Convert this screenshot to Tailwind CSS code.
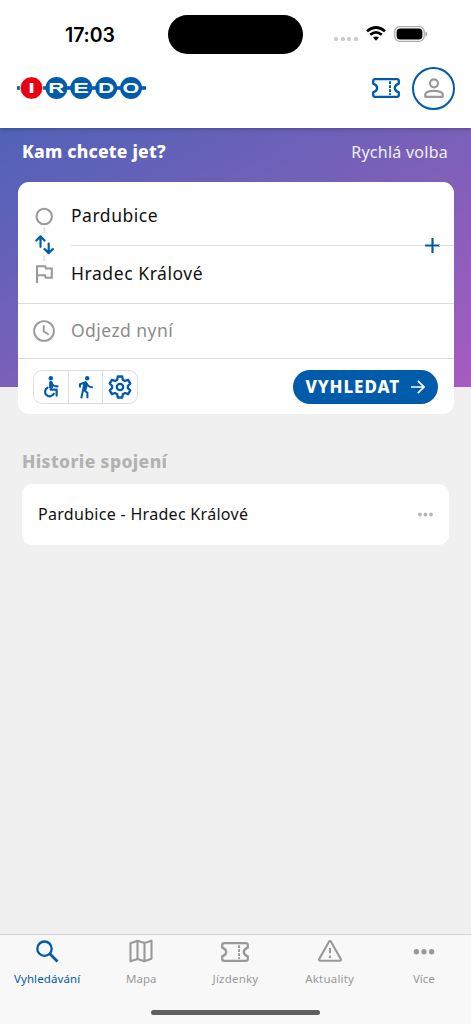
<!DOCTYPE html>
<html lang="cs">
<head>
<meta charset="utf-8">
<title>IREDO</title>
<script src="https://cdn.jsdelivr.net/npm/@tailwindcss/browser@4"></script>
</head>
<body class="w-[471px] h-[1024px] overflow-hidden bg-[#f0f0f0] font-['Noto_Sans',sans-serif] text-[#111] flex flex-col">
<svg class="hidden">
  <symbol id="ticket" viewBox="0 0 28 20"><path d="M3 1.2H25Q26.8 1.2 26.8 3V5.6Q22.8 7.2 22.8 10T26.8 14.4V17Q26.8 18.8 25 18.8H3Q1.2 18.8 1.2 17V14.4Q5.2 12.8 5.2 10T1.2 5.6V3Q1.2 1.2 3 1.2Z" fill="none" stroke="currentColor" stroke-width="2.3" stroke-linejoin="round"/><path d="M18 3.2V17" fill="none" stroke="currentColor" stroke-width="2" stroke-dasharray="2.8 1.2"/></symbol>
</svg>
<header class="h-32 bg-white shrink-0 relative z-10 shadow-[0_1px_4px_rgba(0,0,0,0.25)]">
  <div class="h-[68px] flex pl-[65px] pt-[15px]">
    <div class="w-[103px] h-[39px] leading-[40px] font-['Inter'] font-semibold text-[19.5px] tracking-[-0.1px] text-black">17:03</div>
    <div class="w-[135px] h-[39px] rounded-full bg-black"></div>
    <div class="flex ml-[31px] pt-[22px] gap-[2.5px]">
      <i class="size-1 rounded-[1.5px] bg-[#ccc]"></i><i class="size-1 rounded-[1.5px] bg-[#ccc]"></i><i class="size-1 rounded-[1.5px] bg-[#ccc]"></i><i class="size-1 rounded-[1.5px] bg-[#ccc]"></i>
    </div>
    <svg class="ml-[8px] mt-[11px] w-5 h-[15px] shrink-0" viewBox="0 0 20 15"><g fill="none" stroke="#000" stroke-width="2.7"><path d="M1 5.2Q10-2.2 19 5.2"/><path d="M4.2 8.7Q10 4 15.8 8.7"/></g><path d="M7 11.6Q10 9.2 13 11.6L10 14.8Z"/></svg>
    <svg class="ml-[8px] mt-[11px] w-[34px] h-4 shrink-0" viewBox="0 0 34 16"><rect x=".7" y=".7" width="29.5" height="14.6" rx="5" fill="none" stroke="#aaa" stroke-width="1.3"/><rect x="2.6" y="2.6" width="25.8" height="10.8" rx="3.5"/><path d="M31.5 5.5Q33.2 6 33.2 8T31.5 10.5Z" fill="#999"/></svg>
  </div>
  <div class="flex items-center h-[40px] pl-[17px]">
    <svg class="w-[129px] h-[22px]" viewBox="0 0 129 22" role="img">
      <path d="M0 11H129" stroke="#005baa" stroke-width="3.6"/>
      <circle cx="14.5" cy="11" r="11.3" fill="#e60012" stroke="#fff" stroke-width=".8"/>
      <g fill="#005baa"><circle cx="39.5" cy="11" r="11"/><circle cx="64.3" cy="11" r="11"/><circle cx="89.2" cy="11" r="11"/><circle cx="114" cy="11" r="11"/></g>
      <g fill="#fff" font-family="Liberation Sans" font-weight="bold" font-size="14.5">
        <text x="11.2" y="16.1" textLength="6.6" lengthAdjust="spacingAndGlyphs">I</text>
        <text x="31.2" y="16.1" textLength="16" lengthAdjust="spacingAndGlyphs">R</text>
        <text x="56.2" y="16.1" textLength="15.6" lengthAdjust="spacingAndGlyphs">E</text>
        <text x="81" y="16.1" textLength="16.2" lengthAdjust="spacingAndGlyphs">D</text>
        <text x="105.6" y="16.1" textLength="16.8" lengthAdjust="spacingAndGlyphs">O</text>
      </g>
    </svg>
    <svg class="ml-[226px] w-7 h-5 text-[#005baa]"><use href="#ticket"/></svg>
    <div class="ml-[12px] size-[43px] rounded-full border-2 border-[#005baa] flex items-center justify-center shrink-0">
      <svg class="w-5 h-5" viewBox="0 0 20 20" fill="none" stroke="#999" stroke-width="2.2"><circle cx="10" cy="5.3" r="4"/><path d="M1.3 18.8V16.5C1.3 11.6 18.7 11.6 18.7 16.5V18.8Z" stroke-linejoin="round"/></svg>
    </div>
  </div>
</header>
<section class="h-[259px] shrink-0 bg-[linear-gradient(to_bottom_right,#5062b8,#7a60b9_50%,#a65cbf)] px-[18px]">
  <div class="h-[54px] flex justify-between pl-1 pr-[5px] leading-[48px] text-white">
    <h1 class="font-extrabold text-[17.5px] leading-[47px] tracking-[0.23px]">Kam chcete jet?</h1>
    <span class="text-[16px] tracking-[0.26px] text-white/90">Rychlá volba</span>
  </div>
  <main class="h-[232px] w-[435.5px] rounded-[11px] bg-white">
    <div class="h-[122px] flex border-b border-[#ddd]">
      <div class="w-[53px] pl-[17px] flex flex-col pt-[25px]">
        <svg class="w-5 h-[80px]" viewBox="0 0 20 80" fill="none">
          <circle cx="9.2" cy="9.5" r="7.7" stroke="#999" stroke-width="2.1"/>
          <path d="M9.2 20.5V26M9.2 48.5V54" stroke="#e2e2e2" stroke-width="1.8"/>
          <g stroke="#005baa" stroke-width="2.2" stroke-linecap="round" stroke-linejoin="round"><path d="M5.5 39.8V29.6M1.4 33.5L5.5 29.4L9.6 33.5M13.7 36.5V46M9.6 42L13.7 46.1L17.8 42"/></g>
          <path d="M2 76V59.3H10.2L11 61.5H16.8V70.7H10.8L10 68.3H2" stroke="#999" stroke-width="2.1"/>
        </svg>
      </div>
      <div class="grow text-[17.5px] pt-[5px]">
        <div class="h-[58px] leading-[57px] tracking-[0.53px]">Pardubice</div>
        <div class="h-0 flex items-center"><div class="h-px grow bg-[#ddd]"></div><svg class="size-[15px] my-[-8px] -mx-px shrink-0" viewBox="0 0 15 15"><path d="M0 7.5H15M7.5 0V15" stroke="#005baa" stroke-width="2.2"/></svg><div class="h-px w-[15px] bg-[#ddd]"></div></div>
        <div class="h-[57px] leading-[57px] tracking-[0.57px]">Hradec Králové</div>
      </div>
    </div>
    <div class="h-[55px] flex items-center border-b border-[#ddd] pl-[15px] text-[#8c8c8c]">
      <svg class="size-[22px]" viewBox="0 0 22 22" fill="none" stroke="#999" stroke-width="1.9"><circle cx="11" cy="11" r="9.9"/><path d="M10.7 5.2V11.5L15.8 14.5"/></svg>
      <span class="ml-4 mb-[2px] text-[17.5px] tracking-[0.45px]">Odjezd nyní</span>
    </div>
    <div class="h-[55px] flex justify-between items-center pl-[15px] pr-[16px] pb-px mt-px">
      <div class="flex h-[34px] w-[105px] border border-[#ddd] rounded-[9px] text-[#005baa] divide-x divide-[#ddd]">
        <div class="flex-1 flex items-center justify-center"><svg class="w-4 h-[22px]" viewBox="0 0 16 22"><circle cx="7.8" cy="2.3" r="2.2" fill="currentColor"/><path d="M7.7 6V13.6H13.6V19.6M8 7Q10.5 10.7 14.5 10.3M4.5 11.7A4.6 4.6 0 1 0 10.8 17.8" fill="none" stroke="currentColor" stroke-width="2.2" stroke-linejoin="round" stroke-linecap="round"/><path d="M6.2 6.2Q8 3.9 10 6.5V12H6.2Z" fill="currentColor"/></svg></div>
        <div class="flex-1 flex items-center justify-center"><svg class="w-4 h-[23px]" viewBox="0 0 16 23"><circle cx="9.2" cy="2.2" r="2.2" fill="currentColor"/><path d="M2 11.5V8.2L7.5 6.2L10.5 10Q12 11.3 14.8 11.2M6.5 7L3.3 22.2M5.8 14L9.4 16.8V22.3" fill="none" stroke="currentColor" stroke-width="2"/><path d="M5.5 6.5L8.2 5.4L10 8L8.4 14.5L5 13Z" fill="currentColor"/></svg></div>
        <div class="flex-1 flex items-center justify-center"><svg class="size-[24px] shrink-0" viewBox="0 0 24 24" fill="none" stroke="currentColor" stroke-width="2.3" stroke-linejoin="round"><circle cx="12" cy="12" r="3.2"/><path d="M9.8 1.5H14.2L14.8 4.7L17 6L20.1 4.9L22.3 8.7L19.9 10.8V13.2L22.3 15.3L20.1 19.1L17 18L14.8 19.3L14.2 22.5H9.8L9.2 19.3L7 18L3.9 19.1L1.7 15.3L4.1 13.2V10.8L1.7 8.7L3.9 4.9L7 6L9.2 4.7Z"/></svg></div>
      </div>
      <button class="w-[145px] h-[34px] rounded-full bg-[#005baa] text-white flex items-center pl-[13px] font-extrabold text-[17px]"><span class="w-[105px] text-left tracking-[0.9px] mb-px">VYHLEDAT</span><svg class="w-[14px] h-[14px]" viewBox="0 0 14 14" fill="none" stroke="#fff" stroke-width="1.7"><path d="M0 7H13M6.8 .8L13 7L6.8 13.2"/></svg></button>
    </div>
  </main>
</section>
<section class="grow px-[22px] pt-[57px]">
  <h2 class="h-[39px] leading-[34px] font-extrabold text-[17.5px] tracking-[0.38px] text-[#b2b2b2]">Historie spojení</h2>
  <div class="mt-[0.5px] h-[61px] w-[427px] rounded-[10px] bg-white flex items-center justify-between pl-4 pr-[16px] text-[16px]"><span class="tracking-[0.3px]">Pardubice - Hradec Králové</span><svg class="w-[15px] h-[5px]" viewBox="0 0 15 5" fill="#b5b5b5"><circle cx="2" cy="2.5" r="1.9"/><circle cx="7.5" cy="2.5" r="1.9"/><circle cx="13" cy="2.5" r="1.9"/></svg></div>
</section>
<footer class="h-[90px] shrink-0 bg-[#f8f8f8] border-t border-[#d3d3d3] flex flex-col items-center">
  <nav class="w-full h-[75px] grid grid-cols-5 text-center text-[11.5px] leading-[16px] text-[#999]">
    <a class="flex flex-col items-center pt-[4px] gap-[8px] text-[#005baa]"><svg class="size-6" viewBox="0 0 24 24" fill="none" stroke="currentColor" stroke-width="2.3"><circle cx="9.5" cy="9.7" r="7.2"/><path d="M14.8 14.8L22.5 22.5" stroke-width="2.8"/></svg><span class="tracking-[0.1px]">Vyhledávání</span></a>
    <a class="flex flex-col items-center pt-[4px] gap-[8px]"><svg class="size-6" viewBox="0 0 24 24" fill="none" stroke="currentColor" stroke-width="2.1" stroke-linejoin="round"><path d="M1.5 4.2L8.5 1.7L15.5 4L22.5 1.7V19.8L15.5 22.3L8.5 20L1.5 22.3ZM8.5 2V20M15.5 4V22"/></svg><span>Mapa</span></a>
    <a class="flex flex-col items-center pt-[4px] gap-[8px]"><svg class="w-7 h-5 mt-[3px] mb-px"><use href="#ticket"/></svg><span class="tracking-[0.2px]">Jízdenky</span></a>
    <a class="flex flex-col items-center pt-[4px] gap-[8px]"><svg class="size-6" viewBox="0 0 24 24" fill="none" stroke="currentColor" stroke-width="2.1" stroke-linejoin="round"><path d="M11 2.7Q12 1.4 13 2.7L22.8 20Q23.3 21.8 21.8 21.8H2.2Q.7 21.8 1.2 20Z"/><path d="M12 9V14.2M12 16.6V19"/></svg><span class="tracking-[0.2px]">Aktuality</span></a>
    <a class="flex flex-col items-center pt-[4px] gap-[8px]"><svg class="w-[22px] h-6" viewBox="0 0 22 24" fill="currentColor"><circle cx="3.4" cy="12.8" r="2.7"/><circle cx="11" cy="12.8" r="2.7"/><circle cx="18.6" cy="12.8" r="2.7"/></svg><span>Více</span></a>
  </nav>
  <div class="w-[169px] h-[5px] rounded-full bg-[#5e5f5e]"></div>
</footer>
</body>
</html>
